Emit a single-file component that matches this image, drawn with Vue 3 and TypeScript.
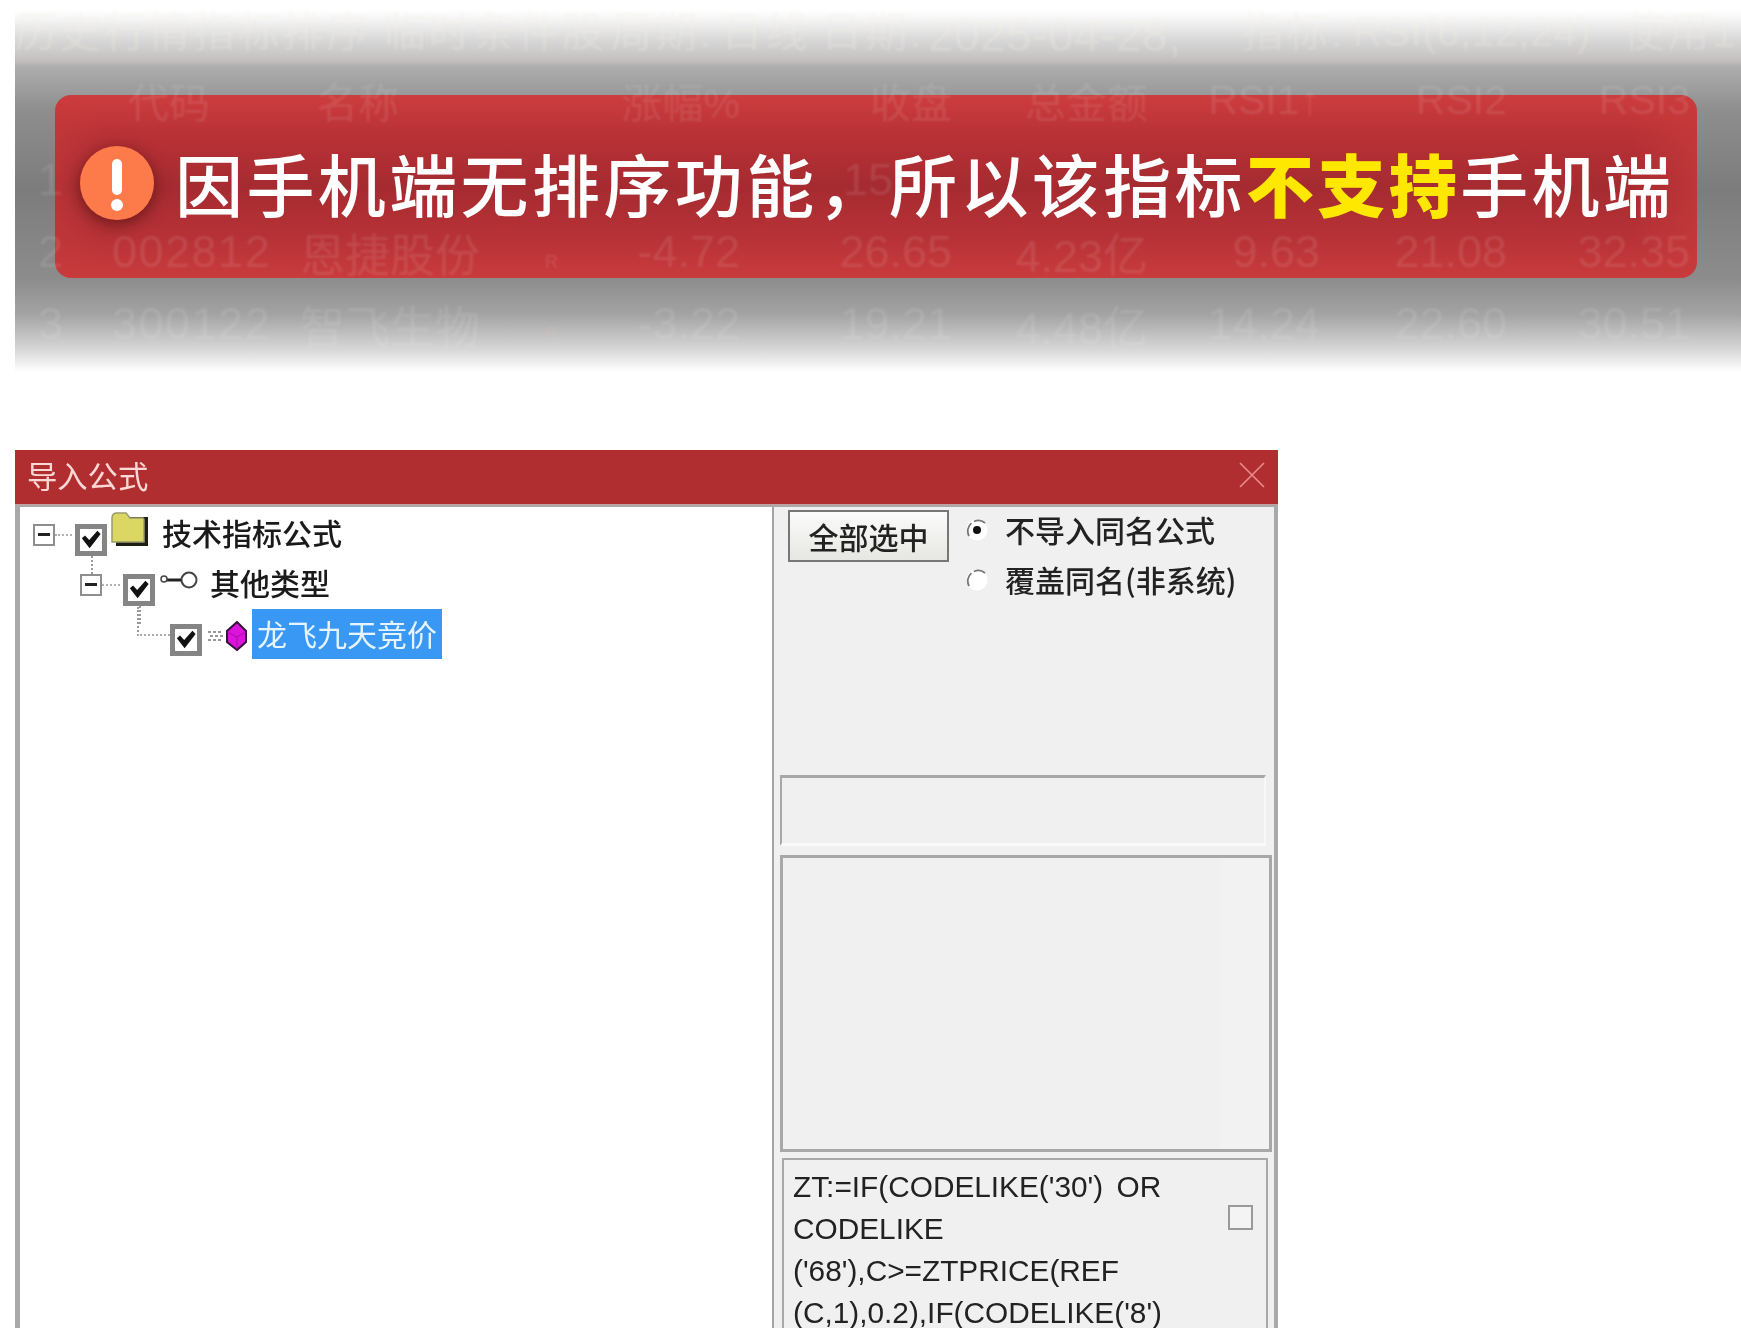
<script setup lang="ts">
interface GhostRow {
  cells: string[]
}
const header: string[] = ['', '代码', '名称', '', '涨幅%', '收盘', '总金额', 'RSI1↑', 'RSI2', 'RSI3']
const rows: GhostRow[] = [
  { cells: ['1', '', '', '', '', '15', '', '', '', ''] },
  { cells: ['2', '002812', '恩捷股份', 'R', '-4.72', '26.65', '4.23亿', '9.63', '21.08', '32.35'] },
  { cells: ['3', '300122', '智飞生物', 'R', '-3.22', '19.21', '4.48亿', '14.24', '22.60', '30.51'] }
]
const formula: string[] = [
  "ZT:=IF(CODELIKE('30') OR",
  'CODELIKE',
  "('68'),C>=ZTPRICE(REF",
  "(C,1),0.2),IF(CODELIKE('8')"
]
</script>

<template>
  <div class="page">
    <section class="notice">
      <div class="ghost">
        <div class="ghost-title">
          <span>历史行情指标排序</span>
          <span class="g1">临时条件股</span>
          <span class="g2">周期:</span>
          <span class="g3">日线</span>
          <span class="g4">日期:</span>
          <span class="g5 num">2025-04-28,</span>
          <span class="g6">指标:</span>
          <span class="g7 num">RSI(6,12,24)</span>
          <span class="g8">使用1</span>
        </div>
        <div class="ghost-row head">
          <span v-for="(c, i) in header" :key="i" :class="'c' + i">{{ c }}</span>
        </div>
        <div v-for="(r, ri) in rows" :key="r.cells[0]" class="ghost-row" :class="{ first: ri === 0 }">
          <span v-for="(c, i) in r.cells" :key="i" :class="'c' + i">{{ c }}</span>
        </div>
      </div>
      <div class="banner">
        <span class="alert">
          <svg viewBox="0 0 74 74" width="74" height="74">
            <circle cx="37" cy="37" r="37" fill="#fd7a4a" />
            <rect x="32" y="13" width="10" height="36" rx="5" fill="#fff" />
            <circle cx="37" cy="59" r="6" fill="#fff" />
          </svg>
        </span>
        <p class="banner-text">因手机端无排序功能，所以该指标<b>不支持</b>手机端</p>
      </div>
    </section>

    <section class="dialog">
      <header class="title">
        <span>导入公式</span>
        <svg class="close" viewBox="0 0 26 26" width="26" height="26">
          <path d="M1 1 25 25M25 1 1 25" stroke="#e98c8c" stroke-width="1.6" fill="none" />
        </svg>
      </header>

      <div class="body">
        <div class="tree">
          <div class="node n1">
            <span class="expander"></span>
            <span class="dots"></span>
            <span class="check has-child">
              <svg viewBox="0 0 24 24" width="24" height="24"><path d="M2 10 5.5 7 10 12 19 2 22.5 5.5 10.5 21Z" fill="#111" /></svg>
            </span>
            <svg class="folder" viewBox="0 0 38 36" width="38" height="36">
              <path d="M5 35V9H20L18 6H37V35Z" fill="#1e1e14" />
              <path d="M1 31V7Q1 2 6 2H15L19 7H32Q33 7 33 9V31Z" fill="#dcd662" stroke="#9a9a70" stroke-width="1.5" />
            </svg>
            <span class="label">技术指标公式</span>
          </div>
          <div class="node n2">
            <span class="expander"></span>
            <span class="dots d2"></span>
            <span class="check has-child">
              <svg viewBox="0 0 24 24" width="24" height="24"><path d="M2 10 5.5 7 10 12 19 2 22.5 5.5 10.5 21Z" fill="#111" /></svg>
            </span>
            <svg class="keyicon" viewBox="0 0 38 18" width="38" height="18">
              <circle cx="29" cy="9" r="7.5" fill="#fff" stroke="#444" stroke-width="2" />
              <path d="M5 9H21" stroke="#222" stroke-width="3" />
              <circle cx="4" cy="8" r="3" fill="#fff" stroke="#444" stroke-width="1.5" />
            </svg>
            <span class="label">其他类型</span>
          </div>
          <div class="node n3">
            <span class="elbow"></span>
            <span class="check">
              <svg viewBox="0 0 24 24" width="24" height="24"><path d="M2 10 5.5 7 10 12 19 2 22.5 5.5 10.5 21Z" fill="#111" /></svg>
            </span>
            <svg class="leaf" viewBox="0 0 40 30" width="40" height="30">
              <path d="M0 11H14M2 15H16M0 19H14" stroke="#777" stroke-width="1.6" stroke-dasharray="3 2" fill="none" />
              <path d="M29 1 38 10V21L29 29 19 21V10Z" fill="#dd12dd" stroke="#36103a" stroke-width="2" />
              <path d="M19 11 29 16 38 11M29 16V28" stroke="#a012a0" stroke-width="1" fill="none" />
            </svg>
            <span class="label selected">龙飞九天竞价</span>
          </div>
        </div>

        <div class="side">
          <div class="side-top">
            <button class="select-all" type="button">全部选中</button>
            <div class="radios">
              <label class="radio">
                <svg viewBox="0 0 24 24" width="24" height="24">
                  <circle cx="12" cy="12" r="10.5" fill="#fff" />
                  <path d="M4 18A10.5 10.5 0 0 1 20 5" stroke="#777" stroke-width="1.8" fill="none" stroke-dasharray="14 3" />
                  <circle cx="12" cy="12" r="4" fill="#111" />
                </svg>
                <span>不导入同名公式</span>
              </label>
              <label class="radio">
                <svg viewBox="0 0 24 24" width="24" height="24">
                  <circle cx="12" cy="12" r="10.5" fill="#fff" />
                  <path d="M4 18A10.5 10.5 0 0 1 20 5" stroke="#777" stroke-width="1.8" fill="none" stroke-dasharray="14 3" />
                </svg>
                <span>覆盖同名(非系统)</span>
              </label>
            </div>
          </div>
          <div class="box-input"></div>
          <div class="box-list"></div>
          <div class="box-formula">
            <div class="formula">
              <div v-for="(l, i) in formula" :key="i">{{ l }}</div>
            </div>
            <span class="mini-check"></span>
          </div>
        </div>
      </div>
    </section>
  </div>
</template>

<style>
html,
body {
  margin: 0;
  background: #fff;
}
</style>

<style scoped>
.page {
  width: 1741px;
  height: 1328px;
  overflow: hidden;
  box-sizing: border-box;
  padding: 10px 0 0 15px;
  background: #fff;
  font-family: "Noto Sans CJK SC", "Liberation Sans", sans-serif;
}

/* ---- notice ---- */
.notice {
  position: relative;
  width: 1726px;
  height: 365px;
  box-sizing: border-box;
  padding: 85px 44px 0 40px;
  overflow: hidden;
  background: linear-gradient(
    180deg,
    #ffffff 0,
    #f4f4f4 10px,
    #d8d8d8 30px,
    #c4c0c0 50px,
    #adadad 57px,
    #8e8e8e 100px,
    #7c7c7c 180px,
    #8c8c8c 268px,
    #a4a4a4 305px,
    #d8d8d8 340px,
    #ffffff 362px
  );
}
.banner {
  box-sizing: border-box;
  height: 183px;
  width: 1642px;
  border-radius: 16px;
  display: flex;
  align-items: center;
  padding: 0 0 7px 25px;
  background:
    linear-gradient(90deg, rgba(200, 58, 60, 0.5), rgba(200, 58, 60, 0) 3%, rgba(200, 58, 60, 0) 96%, rgba(200, 58, 60, 0.7)),
    linear-gradient(180deg, #cd3d3f 0, #ba3236 20%, #a52b30 50%, #b73236 78%, #c93b3d 100%);
}
.alert {
  position: relative;
  z-index: 2;
  display: flex;
  border-radius: 50%;
  box-shadow: 0 4px 16px rgba(60, 10, 10, 0.6);
}
.banner-text {
  position: relative;
  z-index: 2;
  margin: 0 0 0 21px;
  font-size: 68px;
  line-height: 80px;
  letter-spacing: 3.4px;
  font-weight: 500;
  color: #fff;
  white-space: nowrap;
  filter: blur(0.4px);
}
.banner-text b {
  font-weight: 900;
  color: #ffe800;
}

.ghost {
  position: absolute;
  inset: 0;
  z-index: 1;
  font-family: "Liberation Sans", "Noto Sans CJK SC", sans-serif;
  color: rgba(255, 255, 255, 0.1);
  filter: blur(0.8px);
  pointer-events: none;
}
.ghost-title {
  display: flex;
  align-items: flex-start;
  height: 53px;
  font-size: 42px;
  line-height: 1.1;
  letter-spacing: 2.5px;
  white-space: nowrap;
  color: rgba(245, 240, 228, 0.26);
}
.num {
  font-size: 46px;
  letter-spacing: 0.5px;
}
.g1 { margin-left: 13px; }
.g2 { margin-left: 4px; }
.g3 { margin-left: 7px; }
.g4 { margin-left: 11px; }
.g5 { margin-left: 4px; }
.g6 { margin-left: 60px; }
.g7 { margin-left: 8px; font-size: 41px; }
.g8 { margin-left: 32px; }
.ghost-row {
  display: grid;
  grid-template-columns: 90px 195px 240px 60px 140px 212px 196px 172px 187px 183px;
  height: 72px;
  align-items: center;
  font-size: 45px;
  white-space: nowrap;
}
.ghost-row.head {
  margin: 1px 0 8px;
  font-size: 41px;
}
.c0 { padding-left: 23px; }
.c1 { padding-left: 7px; letter-spacing: 1.5px; }
.c3 { font-size: 18px; padding: 20px 0 0 5px; color: rgba(255, 200, 200, 0.16); }
.c4, .c5, .c6, .c7, .c8, .c9 { text-align: right; }
.head .c1 { padding-left: 23px; letter-spacing: 0; }
.head .c2 { padding-left: 17px; }
.first .c5 { padding-right: 59px; }

/* ---- dialog ---- */
.dialog {
  margin-top: 75px;
  width: 1263px;
  height: 878px;
  filter: blur(0.5px);
  color: #222;
}
.title {
  height: 55px;
  box-sizing: border-box;
  background: #b12e30;
  border-bottom: 1px solid #c5a0a0;
  display: flex;
  align-items: center;
  justify-content: space-between;
  padding: 0 13px 4px 12px;
  font-size: 30.3px;
  color: #fbd8d6;
}
.body {
  display: flex;
  height: 823px;
  border-left: 5px solid #a9a9a9;
  border-right: 4px solid #a9a9a9;
  border-top: 2px solid #a9a9a9;
  box-sizing: border-box;
  background: #f0f0f0;
}
.tree {
  width: 754px;
  flex: none;
  box-sizing: border-box;
  background: #fff;
  border-right: 2px solid #a5a5a5;
}
.node {
  display: flex;
  align-items: center;
  height: 50px;
  font-size: 30px;
  font-weight: 500;
  color: #1a1a1a;
}
.n1 { padding-left: 13px; }
.n2 { padding-left: 60px; }
.n3 { padding-left: 117px; align-items: flex-start; }
.expander {
  position: relative;
  width: 22px;
  height: 22px;
  box-sizing: border-box;
  border: 2px solid #8e8e8e;
  background: #fff;
  margin-top: 6px;
  flex: none;
}
.expander::after {
  content: "";
  position: absolute;
  left: 3px;
  right: 3px;
  top: 7px;
  height: 3px;
  background: #222;
}
.dots {
  width: 17px;
  margin: 6px 3px 0 0;
  border-top: 2px dotted #b0b0b0;
  flex: none;
}
.dots.d2 {
  width: 18px;
}
.check {
  position: relative;
  width: 32px;
  height: 32px;
  box-sizing: border-box;
  border: 5px solid #858585;
  background: #fff;
  margin-top: 16px;
  display: flex;
  align-items: center;
  justify-content: center;
  flex: none;
}
.check svg {
  width: 22px;
  height: 22px;
  flex: none;
}
.has-child::after {
  content: "";
  position: absolute;
  left: 11px;
  top: 27px;
  height: 18px;
  border-left: 2px dotted #999;
}
.folder {
  margin: -7px 0 0 4px;
  flex: none;
}
.n1 .label { margin-left: 13px; }
.keyicon {
  margin: -4px 0 0 5px;
  flex: none;
}
.n2 .label { margin-left: 12px; }
.elbow {
  width: 33px;
  height: 29px;
  box-sizing: border-box;
  border-left: 2px dotted #999;
  border-bottom: 2px dotted #aaa;
  flex: none;
}
.n3 .check { margin-top: 17px; }
.leaf {
  margin: 14px 0 0 6px;
  flex: none;
}
.selected {
  margin: 2px 0 0 4px;
  width: 190px;
  height: 50px;
  line-height: 48px;
  text-align: center;
  background: #3a98f5;
  color: #e6f4ff;
  font-weight: 400;
}

.side {
  flex: 1;
  min-width: 0;
  overflow: hidden;
}
.side-top {
  height: 268px;
  padding: 3px 0 0 14px;
  box-sizing: border-box;
  display: flex;
}
.select-all {
  width: 161px;
  height: 52px;
  padding: 0;
  border: 2px solid #777;
  background: linear-gradient(180deg, #fbfbfb, #e6e6e2);
  font: 500 30px/1 "Noto Sans CJK SC", sans-serif;
  color: #222;
}
.radios {
  margin-left: 16px;
  margin-top: -6px;
  display: flex;
  flex-direction: column;
}
.radio {
  display: flex;
  align-items: center;
  gap: 16px;
  height: 50px;
  font-size: 30px;
  font-weight: 500;
  color: #222;
  white-space: nowrap;
}
.radio svg {
  flex: none;
  margin-top: 2px;
}
.box-input {
  margin-left: 6px;
  width: 486px;
  height: 71px;
  box-sizing: border-box;
  border-top: 3px solid #a8a8a8;
  border-left: 2px solid #a8a8a8;
  border-right: 2px solid #f8f8f8;
  border-bottom: 3px solid #fafafa;
}
.box-list {
  margin: 9px 0 0 6px;
  width: 492px;
  height: 297px;
  box-sizing: border-box;
  border: 3px solid #a8a8a8;
  background: linear-gradient(90deg, #f0f0f0 90%, #f2f2f2 90%);
}
.box-formula {
  margin: 6px 0 0 8px;
  width: 486px;
  height: 240px;
  box-sizing: border-box;
  border: 2px solid #a8a8a8;
  display: flex;
  justify-content: space-between;
  padding: 6px 13px 0 9px;
}
.formula {
  font-family: "Liberation Sans", sans-serif;
  font-size: 29.8px;
  word-spacing: 5px;
  line-height: 42px;
  color: #222;
  white-space: nowrap;
}
.mini-check {
  margin-top: 39px;
  width: 25px;
  height: 25px;
  box-sizing: border-box;
  border: 2px solid #999;
  background: #f4f4f4;
  flex: none;
}
</style>
